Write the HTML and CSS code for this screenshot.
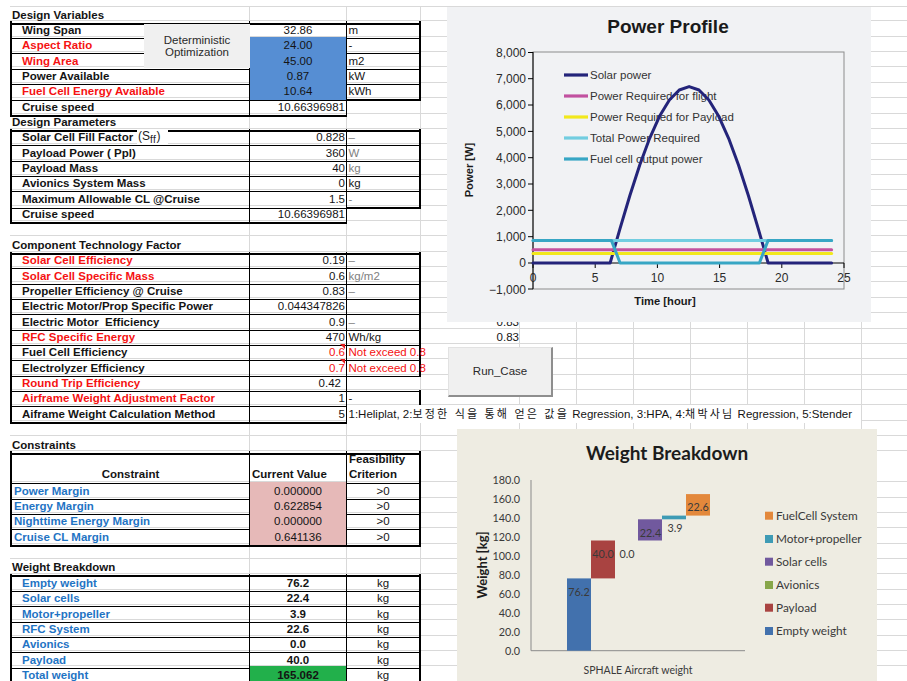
FILE: index.html
```html
<!DOCTYPE html>
<html lang="ko">
<head>
<meta charset="utf-8">
<title>SPHALE sizing sheet</title>
<link rel="stylesheet" href="styles.css">
</head>
<body>
<div class="sheet">
  <!-- Design variables -->
  <div class="row"><div class="c h top">Design Variables</div><div class="c top"></div><div class="c top"></div></div>
  <div class="row"><div class="c lab b l">Wing Span</div><div class="c b ctr">32.86</div><div class="c b r unit">m</div></div>
  <div class="row"><div class="c lab b l red">Aspect Ratio</div><div class="c b ctr fill-blue">24.00</div><div class="c b r unit">-</div></div>
  <div class="row"><div class="c lab b l red">Wing Area</div><div class="c b ctr fill-blue">45.00</div><div class="c b r unit">m2</div></div>
  <div class="row"><div class="c lab b l">Power Available</div><div class="c b ctr fill-blue">0.87</div><div class="c b r unit">kW</div></div>
  <div class="row"><div class="c lab b l red">Fuel Cell Energy Available</div><div class="c b ctr fill-blue">10.64</div><div class="c b r d unit">kWh</div></div>
  <div class="row"><div class="c lab b l d">Cruise speed</div><div class="c b d num">10.66396981</div></div>

  <!-- Design parameters -->
  <div class="row"><div class="c h top">Design Parameters</div><div class="c top"></div><div class="c top"></div></div>
  <div class="row"><div class="c lab b l">Solar Cell Fill Factor</div><div class="c b num">0.828</div><div class="c b r unit gry">–</div></div>
  <div class="row"><div class="c lab b l">Payload Power ( Ppl)</div><div class="c b num">360</div><div class="c b r unit gry">W</div></div>
  <div class="row"><div class="c lab b l">Payload Mass</div><div class="c b num">40</div><div class="c b r unit gry">kg</div></div>
  <div class="row"><div class="c lab b l">Avionics System Mass</div><div class="c b num">0</div><div class="c b r unit">kg</div></div>
  <div class="row"><div class="c lab b l">Maximum Allowable CL @Cruise</div><div class="c b num">1.5</div><div class="c b r d unit gry">-</div></div>
  <div class="row"><div class="c lab b l d">Cruise speed</div><div class="c b d num">10.66396981</div></div>
  <div class="row"></div>

  <!-- Component technology factor -->
  <div class="row"><div class="c h top">Component Technology Factor</div><div class="c top"></div><div class="c top"></div></div>
  <div class="row"><div class="c lab b l red">Solar Cell Efficiency</div><div class="c b num">0.19</div><div class="c b r unit gry">–</div></div>
  <div class="row"><div class="c lab b l red">Solar Cell Specific Mass</div><div class="c b num">0.6</div><div class="c b r unit gry">kg/m2</div></div>
  <div class="row"><div class="c lab b l">Propeller Efficiency @ Cruise</div><div class="c b num">0.83</div><div class="c b r unit gry">–</div></div>
  <div class="row"><div class="c lab b l">Electric Motor/Prop Specific Power</div><div class="c b num">0.044347826</div><div class="c b r"></div></div>
  <div class="row"><div class="c lab b l">Electric Motor&nbsp; Efficiency</div><div class="c b num">0.9</div><div class="c b r unit gry">–</div><div class="c num">0.83</div></div>
  <div class="row"><div class="c lab b l red">RFC Specific Energy</div><div class="c b num">470</div><div class="c b r unit">Wh/kg</div><div class="c num">0.83</div></div>
  <div class="row"><div class="c lab b l">Fuel Cell Efficiency</div><div class="c b num red note">0.6</div><div class="c b r unit red">Not exceed 0.8</div></div>
  <div class="row"><div class="c lab b l">Electrolyzer Efficiency</div><div class="c b num red note">0.7</div><div class="c b r unit red">Not exceed 0.8</div></div>
  <div class="row"><div class="c lab b l red">Round Trip Efficiency</div><div class="c b num inset">0.42</div><div class="c under"></div></div>
  <div class="row"><div class="c lab b l red">Airframe Weight Adjustment Factor</div><div class="c b num">1</div><div class="c b r unit">-</div></div>
  <div class="row"><div class="c lab b l d">Aiframe Weight Calculation Method</div><div class="c b d num">5</div><div class="c unit spill">1:Heliplat, 2:<span class="ko">보정한 식을 통해 얻은 값을</span> Regression, 3:HPA, 4:<span class="ko">채박사님</span> Regression, 5:Stender</div></div>
  <div class="row"></div>

  <!-- Constraints -->
  <div class="row"><div class="c h top">Constraints</div><div class="c top"></div><div class="c top"></div></div>
  <div class="row tall"><div class="c b l ctr hd low">Constraint</div><div class="c b hd low">Current Value</div><div class="c b r hd">Feasibility<br>Criterion</div></div>
  <div class="row"><div class="c b l blu bold">Power Margin</div><div class="c b ctr fill-pink">0.000000</div><div class="c b r ctr">&gt;0</div></div>
  <div class="row"><div class="c b l blu bold">Energy Margin</div><div class="c b ctr fill-pink">0.622854</div><div class="c b r ctr">&gt;0</div></div>
  <div class="row"><div class="c b l blu bold">Nighttime Energy Margin</div><div class="c b ctr fill-pink">0.000000</div><div class="c b r ctr">&gt;0</div></div>
  <div class="row"><div class="c b l d blu bold">Cruise CL Margin</div><div class="c b d ctr fill-pink">0.641136</div><div class="c b r d ctr">&gt;0</div></div>
  <div class="row"></div>

  <!-- Weight breakdown -->
  <div class="row"><div class="c h top">Weight Breakdown</div><div class="c top"></div><div class="c top"></div></div>
  <div class="row"><div class="c lab b l blu">Empty weight</div><div class="c b ctr bold">76.2</div><div class="c b r ctr">kg</div></div>
  <div class="row"><div class="c lab b l blu">Solar cells</div><div class="c b ctr bold">22.4</div><div class="c b r ctr">kg</div></div>
  <div class="row"><div class="c lab b l blu">Motor+propeller</div><div class="c b ctr bold">3.9</div><div class="c b r ctr">kg</div></div>
  <div class="row"><div class="c lab b l blu">RFC System</div><div class="c b ctr bold">22.6</div><div class="c b r ctr">kg</div></div>
  <div class="row"><div class="c lab b l blu">Avionics</div><div class="c b ctr bold">0.0</div><div class="c b r ctr">kg</div></div>
  <div class="row"><div class="c lab b l blu">Payload</div><div class="c b ctr bold">40.0</div><div class="c b r ctr">kg</div></div>
  <div class="row"><div class="c lab b l blu">Total weight</div><div class="c b ctr bold fill-green">165.062</div><div class="c b r ctr">kg</div></div>
</div>

<!-- equation object on the fill factor row -->
<div class="eq">(S<sub>ff</sub>)</div>

<!-- macro buttons -->
<div class="btn btn-opt">Deterministic<br>Optimization</div>
<div class="btn btn-run">Run_Case</div>

<!-- Power profile chart -->
<div class="chart chart-power">
  <svg width="424" height="315" viewBox="0 0 424 315">
    <text class="pp-title" x="221" y="26" text-anchor="middle">Power Profile</text>
    <rect x="86" y="45" width="311" height="237" fill="none" stroke="#8c8c8c" stroke-width="1"/>
    <g class="pp-tick">
      <text x="79" y="49.7">8,000</text>
      <text x="79" y="76">7,000</text>
      <text x="79" y="102.3">6,000</text>
      <text x="79" y="128.7">5,000</text>
      <text x="79" y="155">4,000</text>
      <text x="79" y="181.3">3,000</text>
      <text x="79" y="207.6">2,000</text>
      <text x="79" y="234">1,000</text>
      <text x="79" y="260.3">0</text>
      <text x="79" y="286.6">−1,000</text>
    </g>
    <path d="M86,45V282 M81,45.5H86 M81,71.7H86 M81,98H86 M81,124.4H86 M81,150.7H86 M81,177H86 M81,203.3H86 M81,229.7H86 M81,256H86 M81,282H86" stroke="#000" stroke-width="1" fill="none"/>
    <path d="M86,256H397 M86,256V261 M148.2,256V261 M210.4,256V261 M272.6,256V261 M334.8,256V261 M397,256V261" stroke="#000" stroke-width="1" fill="none"/>
    <g class="pp-xtick" text-anchor="middle">
      <text x="86" y="275">0</text>
      <text x="148.2" y="275">5</text>
      <text x="210.4" y="275">10</text>
      <text x="272.6" y="275">15</text>
      <text x="334.8" y="275">20</text>
      <text x="397" y="275">25</text>
    </g>
    <text class="pp-axis" x="218" y="298" text-anchor="middle">Time [hour]</text>
    <text class="pp-axis" transform="translate(26,163) rotate(-90)" text-anchor="middle">Power [W]</text>

    <g class="pp-legend">
      <line x1="117" y1="68" x2="141" y2="68" stroke="#24247a" stroke-width="3.2"/>
      <text x="143" y="72">Solar power</text>
      <line x1="117" y1="89" x2="141" y2="89" stroke="#c2519f" stroke-width="3.2"/>
      <text x="143" y="93">Power Required for flight</text>
      <line x1="117" y1="110" x2="141" y2="110" stroke="#f2e81c" stroke-width="3.2"/>
      <text x="143" y="114">Power Required for Payload</text>
      <line x1="117" y1="131" x2="141" y2="131" stroke="#72cde0" stroke-width="3.2"/>
      <text x="143" y="135">Total Power Required</text>
      <line x1="117" y1="152" x2="141" y2="152" stroke="#37a6c4" stroke-width="3.2"/>
      <text x="143" y="156">Fuel cell output power</text>
    </g>

    <g fill="none" stroke-width="3" stroke-linejoin="round" stroke-linecap="round">
      <path stroke="#24247a" d="M86,256H163.13L173,221.58L182.88,188.49L192.75,157.99L202.63,131.26L212.5,109.33L222.37,93.03L232.25,82.99L242.12,79.6L252,82.99L261.87,93.03L271.74,109.33L281.62,131.26L291.5,157.99L301.37,188.49L311.24,221.58L321.12,256H384.6"/>
      <path stroke="#c2519f" d="M86,242.8H384.6"/>
      <path stroke="#f2e81c" d="M86,246.5H384.6"/>
      <path stroke="#72cde0" d="M86,233.4H384.6"/>
      <path stroke="#37a6c4" d="M86,233.4H164.4L173.1,256H312.4L321.1,233.4H384.6"/>
    </g>
  </svg>
</div>

<!-- Weight breakdown chart -->
<div class="chart chart-weight">
  <svg width="420" height="252" viewBox="0 0 420 252">
    <text class="wb-title" x="210" y="31" text-anchor="middle">Weight Breakdown</text>
    <g class="wb-tick" text-anchor="end">
      <text x="63" y="54.8">180.0</text>
      <text x="63" y="73.7">160.0</text>
      <text x="63" y="92.7">140.0</text>
      <text x="63" y="111.7">120.0</text>
      <text x="63" y="130.7">100.0</text>
      <text x="63" y="149.6">80.0</text>
      <text x="63" y="168.6">60.0</text>
      <text x="63" y="187.6">40.0</text>
      <text x="63" y="206.5">20.0</text>
      <text x="63" y="225.5">0.0</text>
    </g>
    <path d="M74,51V221.7H288" stroke="#8a8a8a" stroke-width="1" fill="none"/>
    <text class="wb-axis" transform="translate(30,136) rotate(-90)" text-anchor="middle">Weight [kg]</text>
    <text class="wb-cat" x="181" y="245" text-anchor="middle">SPHALE Aircraft weight</text>

    <rect x="110" y="149.4" width="24" height="72.3" fill="#4271ad"/>
    <rect x="134" y="111.5" width="24" height="37.9" fill="#a94341"/>
    <rect x="181" y="90.3" width="24" height="21.2" fill="#71599e"/>
    <rect x="205" y="86.6" width="24" height="3.7" fill="#3e9bb5"/>
    <rect x="229" y="65.1" width="24" height="21.5" fill="#e3883b"/>

    <g class="wb-val" text-anchor="middle">
      <text x="122" y="167">76.2</text>
      <text x="146" y="129">40.0</text>
      <text x="170" y="129">0.0</text>
      <text x="193.5" y="107.5">22.4</text>
      <text x="218" y="103">3.9</text>
      <text x="241" y="82">22.6</text>
    </g>

    <g class="wb-legend">
      <rect x="308" y="82.7" width="8" height="8" fill="#e3883b"/>
      <text x="319" y="90.7">FuelCell System</text>
      <rect x="308" y="106" width="8" height="8" fill="#3e9bb5"/>
      <text x="319" y="114">Motor+propeller</text>
      <rect x="308" y="128.7" width="8" height="8" fill="#71599e"/>
      <text x="319" y="136.7">Solar cells</text>
      <rect x="308" y="152" width="8" height="8" fill="#87a64a"/>
      <text x="319" y="160">Avionics</text>
      <rect x="308" y="174.7" width="8" height="8" fill="#a94341"/>
      <text x="319" y="182.7">Payload</text>
      <rect x="308" y="198" width="8" height="8" fill="#4271ad"/>
      <text x="319" y="206">Empty weight</text>
    </g>
  </svg>
</div>
</body>
</html>
```

FILE: styles.css
```css
:root {
  --rh: 15.37px;
  --grid: #d9d9d9;
  --ink: #141414;
  --line: #000;
}

* { box-sizing: border-box; }

html, body { margin: 0; padding: 0; }

body {
  position: relative;
  width: 907px;
  height: 681px;
  overflow: hidden;
  background: #fff;
  color: var(--ink);
  font-family: "Liberation Sans", "Noto Sans CJK KR", Arial, sans-serif;
  font-size: 11.5px;
}

/* worksheet: top rule plus the vertical gridlines at each column's right edge */
.sheet {
  margin: 6px 0 0 10px;
  width: 909px;
  background:
    linear-gradient(var(--grid), var(--grid)) 0 0 / 100% 1px no-repeat,
    linear-gradient(var(--grid), var(--grid)) 239px 0 / 1px 100% no-repeat,
    linear-gradient(var(--grid), var(--grid)) 336px 0 / 1px 100% no-repeat,
    linear-gradient(var(--grid), var(--grid)) 410px 0 / 1px 100% no-repeat,
    linear-gradient(var(--grid), var(--grid)) 509px 0 / 1px 100% no-repeat,
    linear-gradient(var(--grid), var(--grid)) 566px 0 / 1px 100% no-repeat,
    linear-gradient(var(--grid), var(--grid)) 623px 0 / 1px 100% no-repeat,
    linear-gradient(var(--grid), var(--grid)) 680px 0 / 1px 100% no-repeat,
    linear-gradient(var(--grid), var(--grid)) 737px 0 / 1px 100% no-repeat,
    linear-gradient(var(--grid), var(--grid)) 794px 0 / 1px 100% no-repeat,
    linear-gradient(var(--grid), var(--grid)) 851px 0 / 1px 100% no-repeat;
}

/* one spreadsheet row; bottom gridline drawn as a 1px strip */
.row {
  display: grid;
  grid-template-columns: 240px 97px 74px 99px repeat(7, 57px);
  height: var(--rh);
  background: linear-gradient(var(--grid), var(--grid)) 0 100% / 100% 1px no-repeat;
}
.row.tall { height: calc(var(--rh) * 2); }

.c {
  position: relative;
  min-width: 0;
  padding: 1.5px 2px 0;
  line-height: 15px;
  white-space: nowrap;
  overflow: visible;
}

/* text styles */
.h { font-weight: bold; padding-left: 2px; }
.lab { font-weight: bold; padding-left: 10px; }
.bold { font-weight: bold; }
.hd { font-weight: bold; line-height: var(--rh); padding-top: 0.5px; }
.hd.low { padding-top: calc(var(--rh) + 0.5px); }
.red { color: #f51212; }
.blu { color: #1f74c4; }
.gry { color: #808080; }
.num { text-align: right; padding-right: 1px; }
.num.inset { padding-right: 5px; }
.ctr { text-align: center; }
.unit { padding-left: 1.5px; }

/* cell borders */
.b { border-right: 1px solid var(--line); border-bottom: 1px solid var(--line); }
.l { border-left: 2px solid var(--line); }
.r { border-right-width: 2px; }
.d { border-bottom-width: 2px; }
.top { border-bottom: 2px solid var(--line); }
.under { border-bottom: 1px solid var(--line); }

/* fills */
.fill-blue { background: #568ed3; }
.fill-pink { background: #e6b9b8; }
.fill-green { background: #22b04b; }

/* comment marker in a cell's top-right corner */
.note::after {
  content: "";
  position: absolute;
  top: 0;
  right: 1px;
  border-left: 5px solid transparent;
  border-top: 5px solid #e31b1b;
}

/* long note text running across the empty cells to the right */
.spill {
  grid-column: 3 / 11;
  margin-right: 1px;
  height: calc(100% - 1px);
  background: #fff;
}
.ko { font-size: 11px; letter-spacing: 2.2px; }

/* inline equation object */
.eq {
  position: absolute;
  left: 137px;
  top: 130px;
  width: 31px;
  height: 15px;
  background: #fff;
  font-size: 12px;
  line-height: 12px;
  padding-left: 1px;
  color: #222;
}
.eq sub { font-size: 10px; vertical-align: -3px; line-height: 0; letter-spacing: 0.5px; }

/* macro buttons */
.btn {
  position: absolute;
  display: flex;
  align-items: center;
  justify-content: center;
  text-align: center;
  background: #f0f0f0;
  color: #2a2a2a;
  font-size: 11.5px;
  line-height: 12.5px;
}
.btn-opt { left: 144px; top: 24px; width: 106px; height: 44px; }
.btn-run {
  left: 448px;
  top: 347px;
  width: 105px;
  height: 50px;
  border-top: 1px solid #e2e2e2;
  border-left: 1px solid #e2e2e2;
  border-right: 2px solid #8e8e8e;
  border-bottom: 2px solid #8e8e8e;
}

/* embedded charts */
.chart { position: absolute; }
.chart svg { display: block; }
.chart-power { left: 447px; top: 7px; width: 424px; height: 315px; background: #f1f2f4; }
.chart-weight { left: 457px; top: 429px; width: 420px; height: 252px; background: #eeece2; }

.pp-title { font: bold 19px "Liberation Sans", Arial, sans-serif; fill: #1a1a1a; }
.pp-tick text { font: 12px "Liberation Sans", Arial, sans-serif; fill: #2a2a2a; text-anchor: end; }
.pp-xtick text { font: 12px "Liberation Sans", Arial, sans-serif; fill: #2a2a2a; }
.pp-axis { font: bold 11.2px "Liberation Sans", Arial, sans-serif; fill: #1a1a1a; }
.pp-legend text { font: 11.5px "Liberation Sans", Arial, sans-serif; fill: #333; }

.wb-title { font: bold 19px Lato, "Open Sans", sans-serif; fill: #1c1c1c; }
.wb-tick text { font: 10.8px Lato, "Open Sans", sans-serif; fill: #3a3a3a; }
.wb-axis { font: bold 13px Lato, "Open Sans", sans-serif; fill: #1c1c1c; }
.wb-cat { font: 10.5px Lato, "Open Sans", sans-serif; fill: #3a3a3a; }
.wb-val text { font: 10.8px Lato, "Open Sans", sans-serif; fill: #3a3a3a; }
.wb-legend text { font: 11.8px Lato, "Open Sans", sans-serif; fill: #3a3a3a; }
```
